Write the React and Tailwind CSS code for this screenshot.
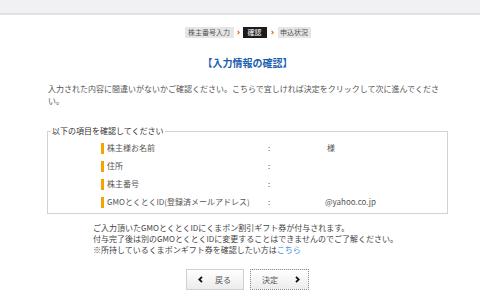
import React from 'react';

const rows = [
  { label: '株主様お名前', value: '様', pad: 'pl-[2px]' },
  { label: '住所', value: '', pad: '' },
  { label: '株主番号', value: '', pad: '' },
  { label: 'GMOとくとくID(登録済メールアドレス)', value: '@yahoo.co.jp', pad: '' },
];

function Chevron({ dir, color = '#111', w = 5, h = 7 }) {
  return (
    <svg width={w} height={h} viewBox="0 0 5 7" className="shrink-0">
      {dir === 'left' ? (
        <polyline points="4,0.8 1.3,3.5 4,6.2" fill="none" stroke={color} strokeWidth="1.8" />
      ) : (
        <polyline points="1,0.8 3.7,3.5 1,6.2" fill="none" stroke={color} strokeWidth="1.8" />
      )}
    </svg>
  );
}

export default function App() {
  return (
    <div className="min-h-[303px] bg-white text-[#555] font-['Noto_Sans_CJK_JP','Noto_Sans',sans-serif]">
      {/* header strip */}
      <div className="h-[15px] bg-[#f1f1f3] border-b-2 border-[#e1e1e3]" />

      <div className="pl-[47px] pr-[32px]">
        {/* steps */}
        <div className="mt-[12px] flex justify-center items-center h-[11px] text-[7px] leading-[11px]">
          <div className="w-[49px] h-[11px] bg-[#e6e6e6] text-[#555] text-center">株主番号入力</div>
          <div className="w-[9px] flex justify-center">
            <Chevron dir="right" color="#e2661c" w={3} h={5} />
          </div>
          <div className="w-[24px] h-[11px] bg-[#1b1b1b] text-white text-center">確認</div>
          <div className="w-[11px] flex justify-center">
            <Chevron dir="right" color="#e2661c" w={3} h={5} />
          </div>
          <div className="w-[33px] h-[11px] bg-[#e6e6e6] text-[#555] text-center">申込状況</div>
        </div>

        {/* title */}
        <h1 className="mt-[18px] text-center text-[10px] leading-[13px] font-bold text-[#1a5ead]">
          【入力情報の確認】
        </h1>

        {/* intro */}
        <p className="mt-[14px] pl-[1px] w-[397px] text-[8px] leading-[12px] text-[#555]">
          入力された内容に間違いがないかご確認ください。こちらで宜しければ決定をクリックして次に進んでください。
        </p>

        {/* confirm box */}
        <fieldset className="mt-[18px] border border-[#d2d2d2] pb-[2px]">
          <legend className="ml-[3px] px-[1px] text-[8px] leading-[12px] text-[#333]">
            以下の項目を確認してください
          </legend>
          <div className="pt-[2px] pl-[53px]">
            {rows.map((r) => (
              <div key={r.label} className="flex items-center h-[18px] text-[8px] text-[#555]">
                <div className="w-[167px] flex items-center">
                  <span className="w-[3px] h-[11px] bg-[#f5a300]" />
                  <span className="ml-[3px] whitespace-nowrap">{r.label}</span>
                </div>
                <div className="w-[57px]">:</div>
                <div className={r.pad}>{r.value}</div>
              </div>
            ))}
          </div>
        </fieldset>

        {/* notes */}
        <div className="mt-[8px] pl-[46px] text-[8px] leading-[11px] text-[#444]">
          <p>ご入力頂いたGMOとくとくIDにくまポン割引ギフト券が付与されます。</p>
          <p>付与完了後は別のGMOとくとくIDに変更することはできませんのでご了解ください。</p>
          <p>
            ※所持しているくまポンギフト券を確認したい方は<a className="text-[#3a8ee0]">こちら</a>
          </p>
        </div>

        {/* buttons */}
        <div className="mt-[14px] flex justify-center gap-[6px]">
          <button className="w-[58px] h-[21px] border border-[#d0d0d0] bg-gradient-to-b from-white to-[#ececec] flex items-center pl-[11px] text-[8px] text-[#555]">
            <Chevron dir="left" />
            <span className="ml-[12px]">戻る</span>
          </button>
          <button className="w-[59px] h-[21px] border border-dotted border-[#8a8a8a] bg-gradient-to-b from-white to-[#ececec] flex items-center pl-[11px] text-[8px] text-[#555]">
            <span>決定</span>
            <span className="ml-[17px]">
              <Chevron dir="right" />
            </span>
          </button>
        </div>
      </div>
    </div>
  );
}
